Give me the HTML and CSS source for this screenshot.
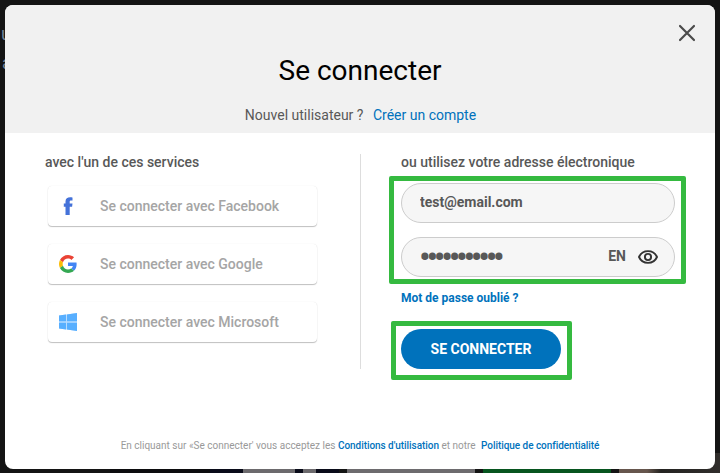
FILE: index.html
```html
<!DOCTYPE html>
<html lang="fr">
<head>
<meta charset="utf-8">
<title>Se connecter</title>
<link rel="stylesheet" href="styles.css">
</head>
<body>
<div class="backdrop" aria-hidden="true">
  <span class="backdrop-text first">u</span>
  <span class="backdrop-text second">a</span>
  <div class="thumbs"><i class="photo"></i><i class="grey"></i><i class="green"></i><i class="brown"></i></div>
</div>
<main class="modal">
  <header class="modal-header">
    <button class="close" aria-label="Fermer"><svg width="18" height="18" viewBox="0 0 18 18"><path d="M2 2 16 16M16 2 2 16"/></svg></button>
    <h1>Se connecter</h1>
    <p class="signup">Nouvel utilisateur ?<a href="#">Créer un compte</a></p>
  </header>
  <div class="columns">
    <section class="services">
      <h2>avec l'un de ces services</h2>
      <button class="service"><svg width="20" height="20" viewBox="0 0 20 20"><path fill="#4472d9" d="M7.5 19v-8.2H5.8V7.5h1.7V5.4C7.5 2.6 9.4 1.2 12.2 1.2c.8 0 1.9.1 2.3.2v3.1h-1.4c-1.2 0-1.4.6-1.4 1.4v1.6h2.8l-.4 3.3h-2.4V19z"/></svg>Se connecter avec Facebook</button>
      <button class="service"><svg width="20" height="20" viewBox="0 0 20 20"><g transform="translate(1 1) scale(.375)"><path fill="#EA4335" d="M24 9.5c3.54 0 6.71 1.22 9.21 3.6l6.85-6.85C35.9 2.38 30.47 0 24 0 14.62 0 6.51 5.38 2.56 13.22l7.98 6.19C12.43 13.72 17.74 9.5 24 9.5z"/><path fill="#4285F4" d="M46.98 24.55c0-1.57-.15-3.09-.38-4.55H24v9.02h12.94c-.58 2.96-2.26 5.48-4.78 7.18l7.73 6c4.51-4.18 7.09-10.36 7.09-17.65z"/><path fill="#FBBC05" d="M10.53 28.59c-.48-1.45-.76-2.99-.76-4.59s.27-3.14.76-4.59l-7.98-6.19C.92 16.46 0 20.12 0 24c0 3.88.92 7.54 2.56 10.78l7.97-6.19z"/><path fill="#34A853" d="M24 48c6.48 0 11.93-2.13 15.89-5.81l-7.73-6c-2.15 1.45-4.92 2.3-8.16 2.3-6.26 0-11.57-4.22-13.47-9.91l-7.98 6.19C6.51 42.62 14.62 48 24 48z"/></g></svg>Se connecter avec Google</button>
      <button class="service"><svg width="20" height="20" viewBox="0 0 20 20"><path fill="#b9dcff" d="M1 3.5 19 1v18L1 16.5z"/><path fill="#58afff" d="M1 3.5 8 2.5V9.3H1zM9 2.4 19 1v8.3H9zM1 10.8h7v6.7l-7-1zM9 10.8h10V19L9 17.6z"/></svg>Se connecter avec Microsoft</button>
    </section>
    <section class="account">
      <h2>ou utilisez votre adresse électronique</h2>
      <div class="highlight fields">
        <div class="field"><input type="text" value="test@email.com" aria-label="Adresse électronique"></div>
        <div class="field"><input class="password" type="password" value="motdepasse1" aria-label="Mot de passe"><span class="lang">EN</span><svg class="eye" width="20" height="14" viewBox="0 0 20 14"><path d="M1 7C2.6 3.4 5.8 1.1 10 1.1S17.4 3.4 19 7c-1.6 3.6-4.8 5.9-9 5.9S2.6 10.6 1 7z"/><circle cx="10" cy="7" r="3.1"/></svg></div>
      </div>
      <a class="forgot" href="#">Mot de passe oublié ?</a>
      <div class="highlight action"><button class="submit">SE CONNECTER</button></div>
    </section>
  </div>
  <footer>En cliquant sur «Se connecter' vous acceptez les <a href="#">Conditions d'utilisation</a> et notre <a class="privacy" href="#">Politique de confidentialité</a></footer>
</main>
</body>
</html>
```
FILE: styles.css
```css
* { box-sizing: border-box; }
body { margin: 0; padding: 5px; height: 473px; overflow: hidden; background: #141414; font-family: Roboto, "Liberation Sans", sans-serif; color: #585858; }
h1, h2, p { margin: 0; }
a { color: #0072bc; text-decoration: none; }
button, input { font: inherit; color: inherit; border: 0; padding: 0; background: none; }
.backdrop { position: absolute; inset: 0; overflow: hidden; }
.backdrop-text { position: absolute; font-size: 18px; line-height: 20px; color: #718299; }
.first { left: 1px; top: 24px; }
.second { left: 2px; top: 53px; }
.thumbs { position: absolute; left: 110px; right: 0; bottom: 0; height: 20px; display: flex; gap: 8px; align-items: stretch; }
.thumbs i { flex: none; }
.photo { width: 229px; background: linear-gradient(90deg, #0c0c0e 0 100px, #090b19 100px 133px, #6c6a6d 133px 185px, #090b19 185px 193px, #6c6a6d 193px 206px, #090b19 206px); }
.grey { width: 128px; background: #6d6b6e; }
.green { width: 128px; background: #07551f; }
.brown { width: 101px; background: linear-gradient(90deg, #66564d 0 28px, #242321 42px, #302d2b); }
.modal { position: relative; width: 710px; height: 464px; display: flex; flex-direction: column; overflow: hidden; border-radius: 8px; background: #fff; }
.modal-header { position: relative; height: 128px; background: #f1f1f1; text-align: center; padding-top: 48px; }
.close { position: absolute; top: 19px; right: 19px; width: 18px; height: 18px; }
.close svg { display: block; fill: none; stroke: #4b4b4b; stroke-width: 2.2; stroke-linecap: round; }
h1 { font-size: 28px; line-height: 36px; font-weight: 400; color: #000; }
.signup { margin-top: 16px; padding-left: 1px; font-size: 14px; line-height: 20px; }
.signup a { margin-left: 9.5px; }
.columns { display: flex; height: 300px; padding: 21px 29px 0 40px; }
.services { width: 316px; height: 215px; border-right: 1px solid #ddd; }
h2 { margin-top: -1px; font-size: 14px; line-height: 18px; font-weight: 500; }
.service { display: flex; align-items: center; gap: 32px; width: 269px; height: 40px; margin: 0 0 18px 3px; padding-left: 10px; border-radius: 4px; color: #a5a5a5; font-size: 14px; font-weight: 500; box-shadow: 0 1px 1px rgba(0,0,0,.24), 0 0 1px rgba(0,0,0,.12); }
.services h2 { margin-bottom: 15px; }
.service svg { flex: none; margin-right: -10px; }
.account { width: 325px; padding-left: 28px; }
.account h2 { padding-left: 12px; }
.highlight { border: 5px solid #35ba40; border-radius: 2px; }
.fields { width: 297px; height: 108px; margin-top: 5px; padding: 2px 6px 0 7px; }
.field { display: flex; align-items: center; height: 40px; margin-bottom: 14px; padding: 0 16px 2px 18px; border: 1px solid #ccc; border-radius: 20px; background: #f6f6f6; font-size: 14px; font-weight: 700; letter-spacing: .1px; }
.field input { flex: 1; min-width: 0; outline: 0; }
.field .password { height: 36px; margin-left: -2px; padding: 2px 0 0 1px; font-size: 35px; font-weight: 400; letter-spacing: -4.4px; }
.lang { margin-right: 12px; font-weight: 700; letter-spacing: 0; }
.eye { flex: none; margin-top: 2px; fill: none; stroke: #333; stroke-width: 1.9; }
.forgot { display: block; margin: 5px 0 0 12px; font-size: 12px; line-height: 18px; font-weight: 700; }
.action { width: 181px; height: 59px; margin: 14px 0 0 2px; padding: 3px 5px; }
.submit { width: 160px; height: 40px; border-radius: 20px; background: #0072bc; color: #fff; font-size: 14px; font-weight: 700; }
footer { text-align: center; padding-top: 5px; font-size: 10px; line-height: 16px; color: #999; }
footer a { font-weight: 500; letter-spacing: -.05px; }
.privacy { margin-left: 3px; }
```
